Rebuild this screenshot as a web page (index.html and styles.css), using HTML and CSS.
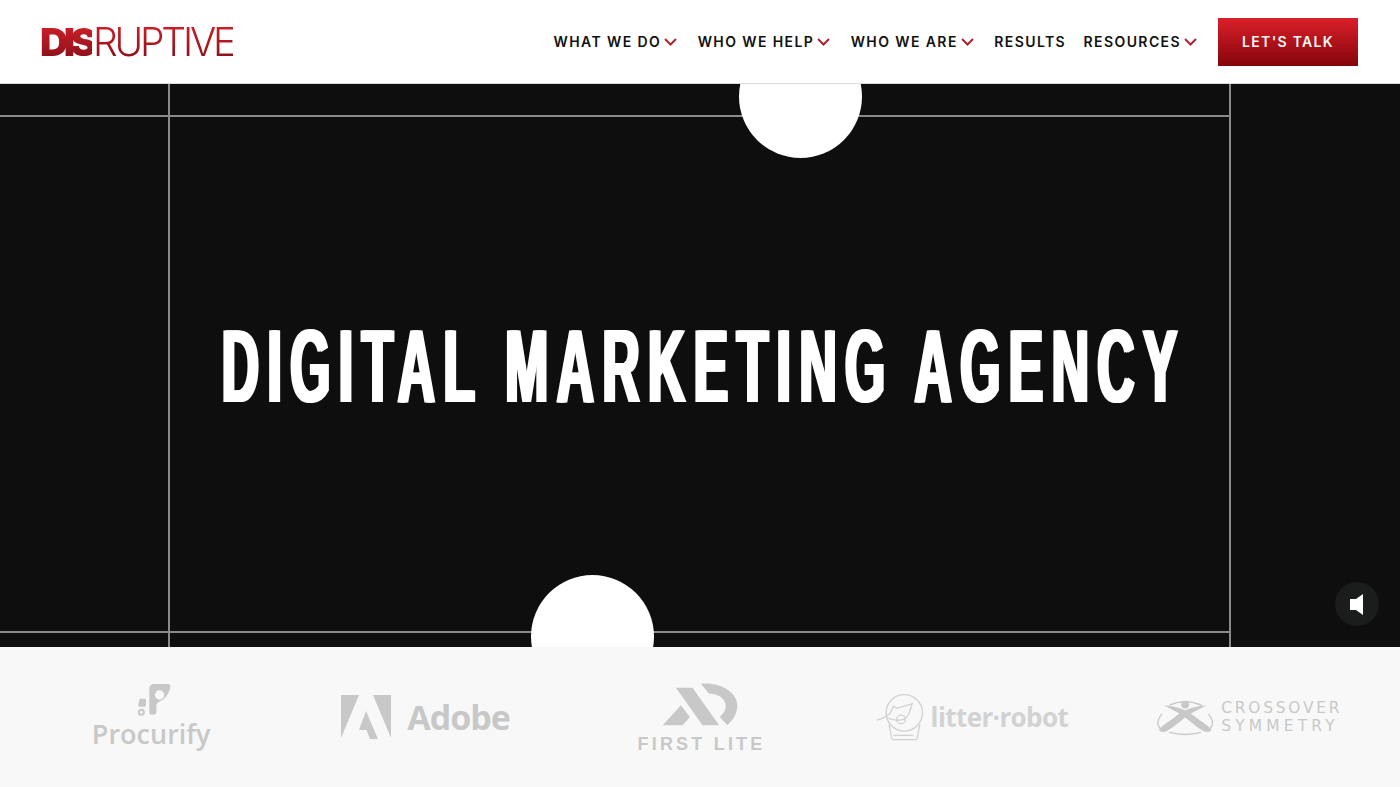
FILE: index.html
```html
<!DOCTYPE html>
<html lang="en">
<head>
  <meta charset="UTF-8" />
  <title>Disruptive Advertising</title>
  <link rel="stylesheet" href="styles.css">
</head>
<body>
  <header class="site-header">
    <a class="logo" href="#"><span class="logo-bold">DIS</span><span class="logo-thin">RUPTIVE</span></a>
    <nav class="main-nav">
      <a class="nav-item" href="#">WHAT WE DO
        <svg class="chev" viewBox="0 0 13 8"><path d="M1 1l5.500 5.500L12 1"/></svg></a>
      <a class="nav-item" href="#">WHO WE HELP
        <svg class="chev" viewBox="0 0 13 8"><path d="M1 1l5.500 5.500L12 1"/></svg></a>
      <a class="nav-item" href="#">WHO WE ARE
        <svg class="chev" viewBox="0 0 13 8"><path d="M1 1l5.500 5.500L12 1"/></svg></a>
      <a class="nav-item nav-plain" href="#">RESULTS</a>
      <a class="nav-item nav-last" href="#">RESOURCES
        <svg class="chev" viewBox="0 0 13 8"><path d="M1 1l5.500 5.500L12 1"/></svg></a>
      <a class="talk-btn" href="#">LET'S TALK</a>
    </nav>
  </header>

  <section class="hero">
    <!-- video frame: guide lines and dots -->
    <div class="line line-h line-top"></div>
    <div class="line line-h line-bottom"></div>
    <div class="line line-v line-left"></div>
    <div class="line line-v line-right"></div>
    <div class="dot dot-top"></div>
    <div class="dot dot-bottom"></div>

    <h1 class="hero-title">DIGITAL MARKETING AGENCY</h1>

    <button class="mute-btn" aria-label="Unmute">
      <svg viewBox="0 0 14 21" width="14" height="21"><path d="M0 5h6l7-5v21l-7-5H0z"/></svg>
    </button>
  </section>

  <section class="clients">
    <div class="client client-stack">
      <svg class="procurify-icon" viewBox="230 65 105 105" width="35" height="35">
        <path fill-rule="evenodd" d="M282 68h42c5 0 7 3 6 8-3 18-12 34-28 42-8 4-13 6-14 16v18c0 6-3 8-8 8h-6c-5 0-7-3-7-8V82c0-8 6-14 15-14zm16 19a14 14 0 100 28 14 14 0 000-28z"/>
        <path d="M240 112h12c4 0 5 2 5 5v14c0 3-2 5-5 5h-14c-4 0-5-3-4-6l3-14c0-2 1-4 3-4z"/>
        <path fill-rule="evenodd" d="M243 142a10 10 0 110 21 10 10 0 010-21zm0 6a4.500 4.500 0 100 9 4.500 4.500 0 000-9z"/>
      </svg>
      <span class="procurify-text">Procurify</span>
    </div>

    <div class="client client-row client-adobe">
      <svg viewBox="342 695 50 44" width="50" height="44">
        <path d="M342 695h18l-18 43zM374 695h18v43zM367 711l12 28h-8l-3.500-9H360z"/>
      </svg>
      <span class="adobe-text">Adobe</span>
    </div>

    <div class="client client-stack">
      <svg viewBox="185 65 235 135" width="78" height="45">
        <path d="M230 82h50l80 113h-50zM190 195l55-60 27 35-22 25zM305 70c65-5 110 30 110 65 0 30-15 45-30 60l-23-25c18-15 23-30 13-50-10-15-30-20-45-20z"/>
      </svg>
      <span class="firstlite-text">FIRST LITE</span>
    </div>

    <div class="client client-row client-litter">
      <svg viewBox="50 70 150 145" width="50" height="48">
        <g fill="none" stroke="#d2d2d2" stroke-width="4">
          <circle cx="138" cy="130" r="55"/>
          <path d="M92 165l8 42c1 3 3 4 6 4h65c3 0 5-1 6-4l8-42"/>
          <path d="M55 152c15-3 28-10 40-20l10-22 12 6c15-5 30-8 45-14l-6 18c-3 18-15 30-32 32-18 2-30-3-40-8"/>
          <circle cx="128" cy="150" r="13"/>
          <path d="M105 198h60"/>
        </g>
      </svg>
      <span class="litter-text">litter·robot</span>
    </div>

    <div class="client client-row client-cross">
      <svg viewBox="20 20 185 115" width="62" height="38">
        <circle cx="110" cy="40" r="12"/>
        <path d="M46 43c38 0 70 15 96 35 20 15 38 26 47 36 2 9-13 12-24 6-24-15-45-35-65-48-16-10-36-20-54-29z"/>
        <path d="M174 43c-38 0-70 15-96 35-20 15-38 26-47 36-2 9 13 12 24 6 24-15 45-35 65-48 16-10 36-20 54-29z"/>
        <g fill="none" stroke="#c8c8c8" stroke-width="4">
          <path d="M62 42c30-14 66-14 98 0M40 68c-14 16-16 32-6 44M180 68c14 16 16 32 6 44M62 124c30 8 66 8 96 0"/>
        </g>
      </svg>
      <div class="cross-text"><span>CROSSOVER</span><span class="cross-second">SYMMETRY</span></div>
    </div>
  </section>
</body>
</html>
```

FILE: styles.css
```css
body {
  margin: 0;
  background-color: #f8f8f8;
  font-family: "Inter", "Liberation Sans", sans-serif;
  height: 787px;
  overflow: hidden;
}

a {
  text-decoration: none;
}

/* HEADER */
.site-header {
  height: 83px;
  background-color: #fff;
  border-bottom: 1px solid #dcdcdc;
  display: flex;
  align-items: center;
  justify-content: space-between;
  padding: 0 42px;
}

.logo {
  display: flex;
  align-items: center;
  margin-left: -2px;
  font-size: 39px;
  line-height: 1;
}

.logo-bold,
.logo-thin {
  background: linear-gradient(to bottom, #d42029, #86101a);
  -webkit-background-clip: text;
  background-clip: text;
  color: transparent;
}

.logo-bold {
  font-weight: 900;
  letter-spacing: -4.5px;
}

.logo-thin {
  font-weight: 300;
  letter-spacing: -3.2px;
  margin-left: 1px;
}

.main-nav {
  display: flex;
  align-items: center;
}

.nav-item {
  display: flex;
  align-items: center;
  gap: 3px;
  color: #111;
  font-size: 14px;
  font-weight: 600;
  letter-spacing: 1.4px;
  margin-right: 20.5px;
  white-space: nowrap;
}

.nav-plain {
  margin-right: 17.5px;
}

.nav-last {
  margin-right: 20px;
}

.chev {
  width: 13px;
  height: 8px;
  fill: none;
  stroke: #ad2530;
  stroke-width: 2;
}

.talk-btn {
  display: block;
  width: 140px;
  height: 48px;
  line-height: 48px;
  text-align: center;
  color: #f8f8f8;
  font-size: 14px;
  font-weight: 600;
  letter-spacing: 1.3px;
  background: linear-gradient(to bottom, #da2029, #85040b);
  margin-left: 1px;
}

/* HERO */
.hero {
  position: relative;
  height: 563px;
  background-color: #0e0e0f;
  overflow: hidden;
  display: flex;
  align-items: center;
  justify-content: center;
}

.line {
  position: absolute;
  background-color: #8a8a8a;
}

.line-h {
  left: 0;
  width: 1231px;
  height: 2px;
}

.line-v {
  top: 0;
  bottom: 0;
  width: 2px;
}

.line-top { top: 31px; }
.line-bottom { top: 547px; }
.line-left { left: 168px; }
.line-right { left: 1229px; }

.dot {
  position: absolute;
  width: 123px;
  height: 123px;
  border-radius: 50%;
  background-color: #fff;
}

.dot-top {
  left: 739px;
  top: -49px;
}

.dot-bottom {
  left: 531px;
  top: 491px;
}

.hero-title {
  flex-shrink: 0;
  margin: 0;
  padding: 2px 0 0 17px;
  color: #fff;
  font-family: "Liberation Sans", sans-serif;
  font-size: 103px;
  font-weight: 700;
  line-height: 1;
  letter-spacing: 17px;
  white-space: nowrap;
  transform: scaleX(0.5);
  text-shadow: 3.5px 0 #fff, -3.5px 0 #fff;
}

.mute-btn {
  position: absolute;
  left: 1335px;
  top: 498px;
  width: 44px;
  height: 44px;
  padding: 0;
  border: 0;
  border-radius: 50%;
  background-color: #1b1c1c;
  display: flex;
  align-items: center;
  justify-content: center;
}

.mute-btn svg {
  fill: #fff;
}

/* CLIENT LOGOS */
.clients {
  height: 140px;
  padding: 0 14px;
  display: grid;
  grid-template-columns: repeat(5, 1fr);
  align-items: center;
  justify-items: center;
  color: #c8c8c8;
}

.clients svg {
  fill: #c8c8c8;
  display: block;
}

.client-stack {
  display: flex;
  flex-direction: column;
  align-items: center;
}

.client-row {
  display: flex;
  align-items: center;
  gap: 12px;
}

.procurify-icon {
  margin: 0 0 -1px 6px;
}

.procurify-text {
  font-family: "Open Sans", sans-serif;
  font-size: 27px;
  font-weight: 600;
  line-height: 34px;
}

.client-adobe {
  gap: 16px;
}

.adobe-text {
  font-family: "Open Sans", sans-serif;
  font-size: 34px;
  font-weight: 700;
  letter-spacing: -1px;
  line-height: 44px;
}

.firstlite-text {
  margin-top: 8px;
  padding-left: 3px;
  font-family: "Liberation Sans", sans-serif;
  font-size: 18px;
  font-weight: 700;
  letter-spacing: 3.2px;
  line-height: 18px;
}

.client-litter {
  gap: 6px;
  margin-right: 6px;
  color: #d2d2d2;
}

.litter-text {
  font-family: "Open Sans", sans-serif;
  font-size: 26px;
  font-weight: 700;
  letter-spacing: -0.6px;
  line-height: 34px;
}

.client-cross {
  gap: 4px;
}

.cross-text {
  display: flex;
  flex-direction: column;
  font-family: "DejaVu Sans", sans-serif;
  font-size: 15.4px;
  line-height: 18px;
  letter-spacing: 2.8px;
}

.cross-second {
  letter-spacing: 4.2px;
}
```
